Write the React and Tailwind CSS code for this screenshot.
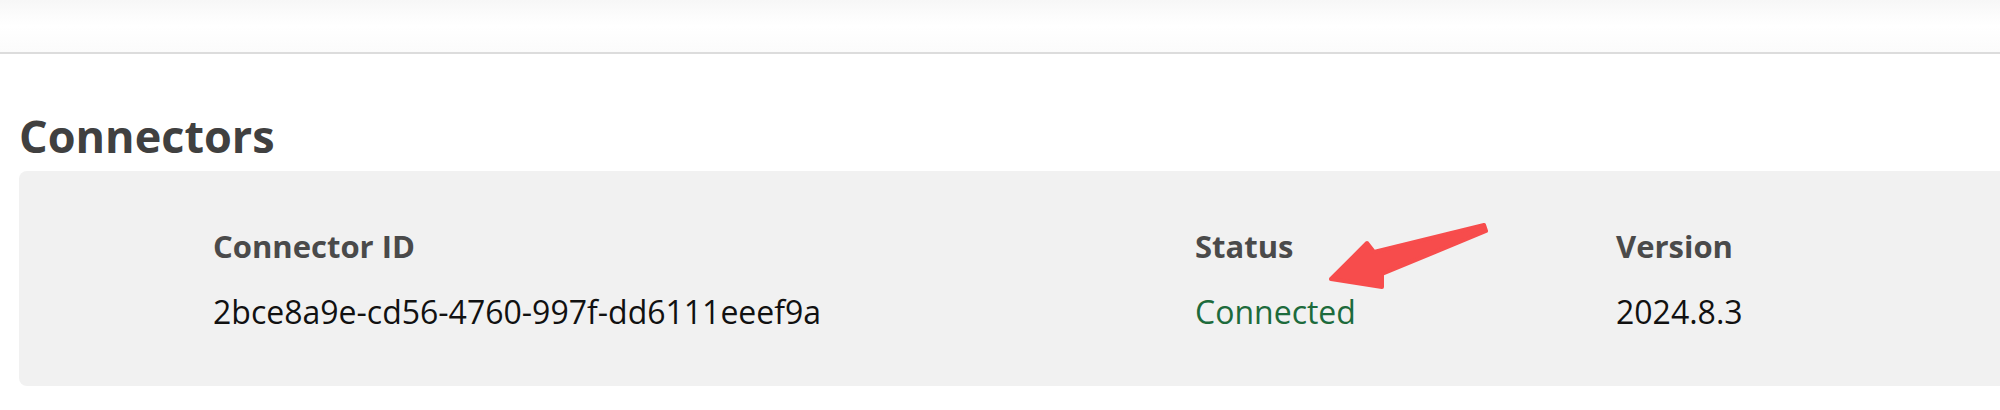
import React from 'react';

const connectors = [
    { id: '2bce8a9e-cd56-4760-997f-dd6111eeef9a', status: 'Connected', version: '2024.8.3' },
];

function Arrow() {
    return (
        <svg className="absolute left-0 top-0 pointer-events-none" width="2000" height="410" viewBox="0 0 2000 410">
            <polygon
                points="1331,279 1367,243 1374,252 1484,225 1486,231 1382,274 1382,287"
                fill="#f74c4c"
                stroke="#f74c4c"
                strokeWidth="4"
                strokeLinejoin="round"
            />
        </svg>
    );
}

function App() {
    return (
        <div className="relative w-[2000px] h-[410px] overflow-hidden bg-white font-['Open_Sans',sans-serif]">
            {/* Top bar */}
            <header className="h-[54px] bg-gradient-to-b from-[#f7f7f7] via-white to-[#fbfbfb] border-b-2 border-[#dcdcdc]" />

            {/* Connectors section */}
            <section className="pl-[19px]">
                <h1 className="mt-[50px] text-[45px] leading-[64px] font-bold text-[#404040]">Connectors</h1>
                <div className="mt-[3px] h-[215px] rounded-l-lg bg-[#f1f1f1] pl-[194px] pt-[43px]">
                    <div className="grid grid-cols-[982px_421px_1fr] text-[32px] leading-[65px]">
                        <div className="text-[31px] font-bold text-[#4a4a4a]">Connector ID</div>
                        <div className="text-[31px] font-bold text-[#4a4a4a]">Status</div>
                        <div className="text-[31px] font-bold text-[#4a4a4a]">Version</div>
                        {connectors.map(c => (
                            <React.Fragment key={c.id}>
                                <div className="text-[#111]">{c.id}</div>
                                <div className="text-[#1d6b3c]">{c.status}</div>
                                <div className="text-[#111]">{c.version}</div>
                            </React.Fragment>
                        ))}
                    </div>
                </div>
            </section>

            <Arrow />
        </div>
    );
}

export default App;
